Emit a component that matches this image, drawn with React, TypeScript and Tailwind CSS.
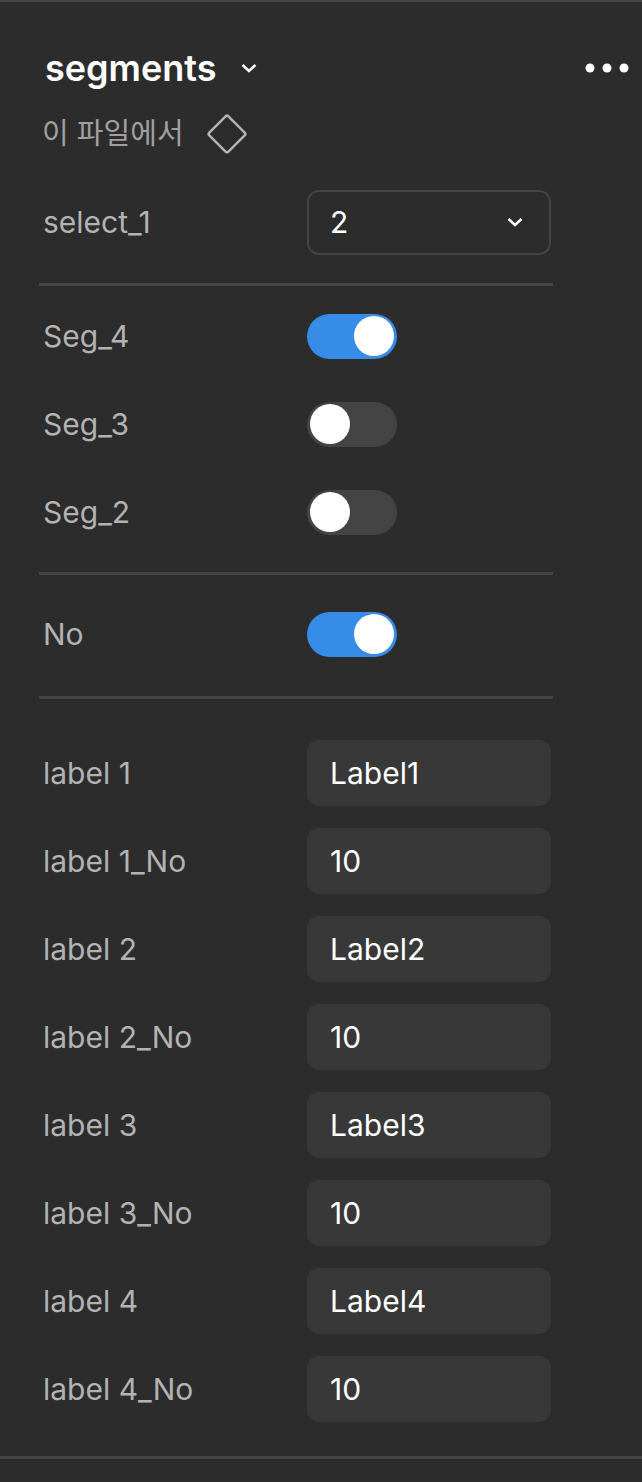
import { useState } from 'react';

const toggles = ['Seg_4', 'Seg_3', 'Seg_2'];

const fields = [
  { name: 'label 1', value: 'Label1' },
  { name: 'label 1_No', value: '10' },
  { name: 'label 2', value: 'Label2' },
  { name: 'label 2_No', value: '10' },
  { name: 'label 3', value: 'Label3' },
  { name: 'label 3_No', value: '10' },
  { name: 'label 4', value: 'Label4' },
  { name: 'label 4_No', value: '10' },
];

function Chevron() {
  return (
    <svg width="16" height="10" viewBox="0 0 16 10" fill="none" stroke="currentColor" strokeWidth="2.5" aria-hidden="true">
      <path d="M1.500 2 8 8l6.500-6" />
    </svg>
  );
}

function Row({ id, label, children }: { id: string; label: string; children: React.ReactNode }) {
  return (
    <div className="grid min-h-[66px] grid-cols-[264px_1fr] items-center">
      <label htmlFor={id} className="text-[#b3b3b3]">
        {label}
      </label>
      {children}
    </div>
  );
}

function Toggle({ label, defaultOn = false }: { label: string; defaultOn?: boolean }) {
  const [on, setOn] = useState(defaultOn);

  return (
    <Row id={label} label={label}>
      <input
        id={label}
        type="checkbox"
        role="switch"
        checked={on}
        onChange={(e) => setOn(e.target.checked)}
        className="flex h-[45px] w-[90px] cursor-pointer appearance-none items-center rounded-full bg-[#444444] px-[3px] before:size-10 before:rounded-full before:bg-white checked:justify-end checked:bg-[#378ce7]"
      />
    </Row>
  );
}

function Divider() {
  return <hr className="-mr-[2px] -ml-1 border-t-[3px] border-[#444444]" />;
}

export default function App() {
  const [variant, setVariant] = useState('2');

  return (
    <div className="min-h-screen bg-[#2c2c2c] font-['Inter','Noto_Sans_CJK_KR',sans-serif] text-[30px] leading-9 text-white">
      <section className="border-y-[3px] border-t-2 border-[#444444] pb-[34px]">
        {/* Header */}
        <header className="pt-11 pr-[13px] pl-[45px]">
          <div className="flex h-11 items-center justify-between">
            <button className="flex items-center gap-6 text-[36px] leading-[44px] font-semibold">
              segments
              <Chevron />
            </button>
            <button aria-label="More">
              <svg width="44" height="10" viewBox="0 0 44 10" fill="currentColor" aria-hidden="true">
                <circle cx="5" cy="5" r="4.5" />
                <circle cx="22" cy="5" r="4.5" />
                <circle cx="39" cy="5" r="4.5" />
              </svg>
            </button>
          </div>
        </header>
        <div className="mt-[22px] flex h-11 items-center gap-[22px] pl-[42px] text-[#b3b3b3]">
          <span className="text-[29px] text-[#a0a0a0]">이 파일에서</span>
          <svg width="42" height="42" viewBox="0 0 42 42" fill="none" stroke="currentColor" strokeWidth="2.5" aria-hidden="true">
            <rect x="7.5" y="7.5" width="27" height="27" rx="2" transform="rotate(45 21 21)" />
          </svg>
        </div>

        {/* Properties */}
        <div className="mt-[33px] pr-[91px] pl-[43px]">
          <Row id="select_1" label="select_1">
            <div className="relative">
              <select
                id="select_1"
                value={variant}
                onChange={(e) => setVariant(e.target.value)}
                className="h-[65px] w-full appearance-none rounded-xl border-2 border-[#444444] bg-transparent px-[21px]"
              >
                <option>1</option>
                <option>2</option>
                <option>3</option>
              </select>
              <span className="pointer-events-none absolute inset-y-0 right-7 flex items-center">
                <Chevron />
              </span>
            </div>
          </Row>

          <div className="mt-7">
            <Divider />
          </div>
          <div className="mt-[17px] mb-[27px] flex flex-col gap-[22px]">
            {toggles.map((name) => (
              <Toggle key={name} label={name} defaultOn={name === 'Seg_4'} />
            ))}
          </div>

          <Divider />
          <div className="mt-[26px] mb-[29px]">
            <Toggle label="No" defaultOn />
          </div>

          <Divider />
          <div className="mt-[41px] flex flex-col gap-[22px]">
            {fields.map(({ name, value }) => (
              <Row key={name} id={name} label={name}>
                <input
                  id={name}
                  type="text"
                  defaultValue={value}
                  className="h-[66px] w-full min-w-0 rounded-xl bg-[#383838] px-[23px]"
                />
              </Row>
            ))}
          </div>
        </div>
      </section>
    </div>
  );
}
